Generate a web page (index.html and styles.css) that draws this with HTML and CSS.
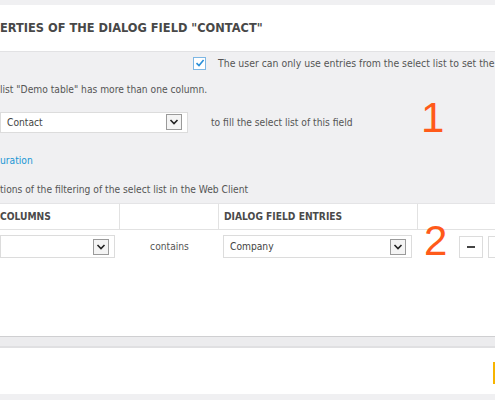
FILE: index.html
```html
<!DOCTYPE html>
<html>
<head>
<meta charset="utf-8">
<link rel="stylesheet" href="styles.css">
</head>
<body>
<div class="page">
  <div class="header">
    <h1 class="title">ERTIES OF THE DIALOG FIELD "CONTACT"</h1>
  </div>
  <div class="content">
    <div class="check-row">
      <span class="checkbox">
        <svg width="10" height="10" viewBox="0 0 10 10"><path d="M1.5 5.2 L4 7.6 L8.6 2" fill="none" stroke="#2a8fd8" stroke-width="1.6"/></svg>
      </span>
      <span class="check-label">The user can only use entries from the select list to set the</span>
    </div>
    <p class="note">list "Demo table" has more than one column.</p>
    <div class="select-row">
      <div class="select wide-select">
        <span class="select-value">Contact</span>
        <span class="arrow"><svg width="10" height="6" viewBox="0 0 10 6"><path d="M1.5 1 L5 4.5 L8.5 1" fill="none" stroke="#222" stroke-width="1.6"/></svg></span>
      </div>
      <span class="select-hint">to fill the select list of this field</span>
    </div>
    <a class="link">uration</a>
    <p class="options">tions of the filtering of the select list in the Web Client</p>
    <div class="table">
      <div class="thead">
        <div class="th c1">COLUMNS</div>
        <div class="th c2"></div>
        <div class="th c3">DIALOG FIELD ENTRIES</div>
        <div class="th c4"></div>
      </div>
      <div class="trow">
        <div class="td c1">
          <div class="select col-select">
            <span class="select-value"></span>
            <span class="arrow"><svg width="10" height="6" viewBox="0 0 10 6"><path d="M1.5 1 L5 4.5 L8.5 1" fill="none" stroke="#222" stroke-width="1.6"/></svg></span>
          </div>
        </div>
        <div class="td c2 contains">contains</div>
        <div class="td c3">
          <div class="select entry-select">
            <span class="select-value">Company</span>
            <span class="arrow"><svg width="10" height="6" viewBox="0 0 10 6"><path d="M1.5 1 L5 4.5 L8.5 1" fill="none" stroke="#222" stroke-width="1.6"/></svg></span>
          </div>
        </div>
        <div class="td c4 buttons">
          <button class="btn"><span class="dash"></span></button>
          <button class="btn"></button>
        </div>
      </div>
    </div>
  </div>
  <div class="footer-bar"></div>
  <div class="footer">
    <span class="accent"></span>
  </div>
  <span class="marker m1">1</span>
  <span class="marker m2">2</span>
</div>
</body>
</html>
```

FILE: styles.css
```css
html, body {
  margin: 0;
  padding: 0;
}
body {
  background: #f0f0f2;
  font-family: "DejaVu Sans Condensed", "DejaVu Sans", "Liberation Sans", sans-serif;
  font-stretch: condensed;
  font-size: 10.2px;
  color: #555;
  width: 495px;
  height: 400px;
  overflow: hidden;
}
.page {
  position: relative;
  padding-top: 5px;
}
.header {
  background: #fff;
  height: 46px;
  display: flex;
  align-items: center;
  border-bottom: 1px solid #e2e2e4;
}
.title {
  margin: 0;
  font-family: "DejaVu Sans", sans-serif;
  font-stretch: normal;
  font-size: 11.4px;
  font-weight: bold;
  color: #484848;
  white-space: nowrap;
}
.content {
  display: flex;
  flex-direction: column;
}
.check-row {
  display: flex;
  align-items: center;
  padding-left: 193px;
  margin-top: 4px;
  height: 14px;
  white-space: nowrap;
}
.checkbox {
  width: 11px;
  height: 11px;
  border: 1px solid #7db7e4;
  background: #fff;
  display: flex;
  align-items: center;
  justify-content: center;
  margin-right: 12px;
}
.check-label {
  color: #555;
  font-size: 10.4px;
}
.note {
  margin: 13px 0 0;
  height: 14px;
  line-height: 14px;
}
.select-row {
  display: flex;
  align-items: center;
  margin-top: 14px;
  height: 22px;
}
.select {
  background: #fff;
  border: 1px solid #dcdcdc;
  height: 21px;
  display: flex;
  align-items: center;
  justify-content: space-between;
  box-sizing: border-box;
}
.select-value {
  padding-left: 6px;
  color: #444;
}
.arrow {
  width: 16px;
  height: 16px;
  border: 1px solid #9a9a9a;
  background: #f4f4f4;
  display: flex;
  align-items: center;
  justify-content: center;
  margin-right: 5px;
  box-sizing: border-box;
}
.wide-select {
  width: 188px;
}
.select-hint {
  margin-left: 23px;
}
.link {
  color: #1a96d4;
  margin-top: 21px;
  height: 14px;
  line-height: 14px;
}
.options {
  margin: 15px 0 0;
  height: 14px;
  line-height: 14px;
}
.table {
  margin-top: 6px;
  background: #fff;
  border-top: 1px solid #e4e4e6;
  height: 132px;
}
.thead {
  display: grid;
  grid-template-columns: 120px 99px 199px 1fr;
  height: 25px;
  border-bottom: 1px solid #e2e2e2;
}
.th {
  font-weight: bold;
  color: #4a4a4a;
  display: flex;
  align-items: center;
  border-right: 1px solid #e2e2e2;
}
.th.c3 {
  padding-left: 5px;
}
.th.c4 {
  border-right: none;
}
.trow {
  display: grid;
  grid-template-columns: 120px 99px 199px 1fr;
  padding-top: 5px;
}
.td {
  display: flex;
  align-items: flex-start;
}
.col-select {
  width: 115px;
  height: 23px;
}
.contains {
  justify-content: center;
  padding-top: 6px;
  color: #555;
}
.entry-select {
  margin-left: 4px;
  width: 189px;
  height: 23px;
}
.buttons {
  padding-left: 41px;
  gap: 5px;
  padding-top: 1px;
}
.btn {
  width: 24px;
  height: 22px;
  border: 1px solid #dcdcdc;
  background: #fff;
  padding: 0;
  display: flex;
  align-items: center;
  justify-content: center;
}
.dash {
  width: 8px;
  height: 2px;
  background: #444;
}
.footer-bar {
  height: 9px;
  background: #ececee;
  border-top: 1px solid #cfcfd1;
  border-bottom: 2px solid #e0e0e2;
}
.footer {
  background: #fff;
  height: 46px;
  position: relative;
}
.accent {
  position: absolute;
  right: 0;
  top: 14px;
  width: 2px;
  height: 22px;
  background: #f7b400;
}
.marker {
  position: absolute;
  color: #ff5a1a;
  font-family: "Liberation Sans", sans-serif;
  font-size: 42px;
  line-height: 1;
}
.m1 {
  left: 421px;
  top: 97px;
}
.m2 {
  left: 424px;
  top: 220px;
}
```
